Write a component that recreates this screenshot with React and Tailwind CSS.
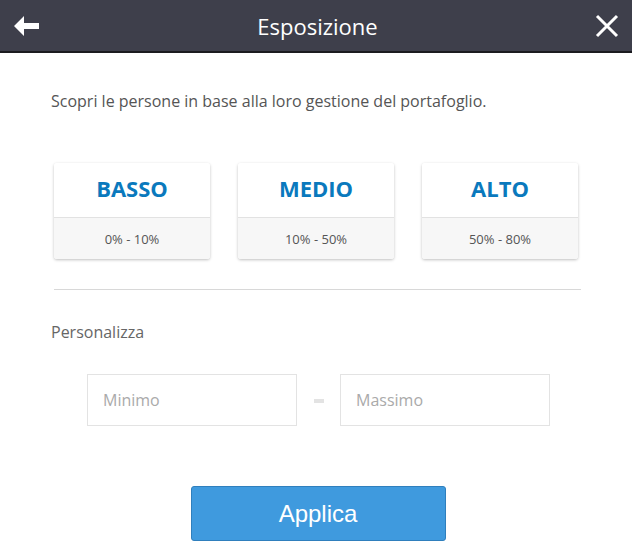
export default function App() {
  const cards = [
    { label: 'BASSO', range: '0% - 10%' },
    { label: 'MEDIO', range: '10% - 50%' },
    { label: 'ALTO', range: '50% - 80%' },
  ]

  return (
    <div className="w-[632px] h-[551px] bg-white overflow-hidden" style={{ fontFamily: '"Open Sans", sans-serif' }}>
      <div className="h-[53px] bg-[#3e3f4b] border-b-2 border-[#1b1b1f] flex items-center justify-between px-[14px]">
        <svg width="26" height="22" viewBox="0 0 26 22" className="mt-[1px]">
          <path d="M0 11 L10 1 L10 8 L25 8 L25 14 L10 14 L10 21 Z" fill="#fff" />
        </svg>
        <h1 className="text-white text-[22px] leading-none">Esposizione</h1>
        <svg width="24" height="24" viewBox="0 0 24 24" className="mr-[-1px]">
          <path d="M2 2 L22 22 M22 2 L2 22" stroke="#fff" strokeWidth="3" />
        </svg>
      </div>

      <div className="px-[51px]">
        <p className="mt-[38px] text-[16px] text-[#555] leading-5">
          Scopri le persone in base alla loro gestione del portafoglio.
        </p>

        <div className="mt-[52px] flex gap-[28px] pl-[3px]">
          {cards.map((c) => (
            <div key={c.label} className="w-[156px] rounded-[3px] shadow-[0_1px_3px_rgba(0,0,0,0.25)] overflow-hidden">
              <div className="h-[55px] flex items-center justify-center border-b border-[#e2e2e2] bg-white">
                <span className="text-[22px] font-bold text-[#0a79bd] mt-[-3px]">{c.label}</span>
              </div>
              <div className="h-[41px] flex items-center justify-center bg-[#f7f7f7]">
                <span className="text-[13px] text-[#555] mt-[2px]">{c.range}</span>
              </div>
            </div>
          ))}
        </div>

        <div className="mt-[30px] ml-[3px] w-[527px] border-t border-[#d8d8d8]" />

        <p className="mt-[32px] text-[16px] leading-5 text-[#666]">Personalizza</p>

        <div className="mt-[32px] ml-[36px] flex items-center">
          <div className="w-[210px] h-[52px] border border-[#e3e3e3] flex items-center px-[15px] text-[16px] text-[#aaa]">Minimo</div>
          <div className="w-[43px] flex justify-center">
            <div className="w-[10px] h-[4px] bg-[#e3e3e3] mt-[1px]" />
          </div>
          <div className="w-[210px] h-[52px] border border-[#e3e3e3] flex items-center px-[15px] text-[16px] text-[#aaa]">Massimo</div>
        </div>
      </div>

      <div className="mt-[60px] flex justify-center pl-[4px]">
        <button
          className="w-[255px] h-[55px] rounded-[3px] bg-[#3f9ade] border border-[#2f7fbd] text-white text-[24px]"
          style={{ fontFamily: '"Liberation Sans", Arial, sans-serif' }}
        >
          Applica
        </button>
      </div>
    </div>
  )
}
